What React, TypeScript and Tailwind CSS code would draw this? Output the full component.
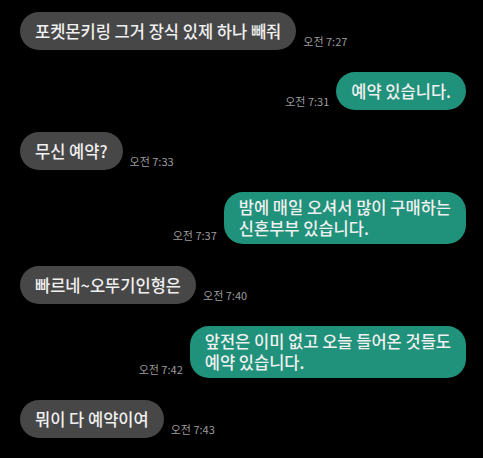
type Message = {
  me: boolean;
  lines: string[];
  time: string;
};

const messages: Message[] = [
  { me: false, lines: ['포켓몬키링 그거 장식 있제 하나 빼줘'], time: '오전 7:27' },
  { me: true, lines: ['예약 있습니다.'], time: '오전 7:31' },
  { me: false, lines: ['무신 예약?'], time: '오전 7:33' },
  { me: true, lines: ['밤에 매일 오셔서 많이 구매하는', '신혼부부 있습니다.'], time: '오전 7:37' },
  { me: false, lines: ['빠르네~오뚜기인형은'], time: '오전 7:40' },
  { me: true, lines: ['앞전은 이미 없고 오늘 들어온 것들도', '예약 있습니다.'], time: '오전 7:42' },
  { me: false, lines: ['뭐이 다 예약이여'], time: '오전 7:43' },
];

function Bubble({ msg }: { msg: Message }) {
  const bubble = (
    <div
      className={
        'min-h-[38px] flex flex-col justify-center px-[15px] py-[5px] rounded-[19px] text-[16.5px] leading-[21px] font-medium text-[#f0f0f0] whitespace-nowrap ' +
        (msg.me ? 'bg-[#20917a]' : 'bg-[#474747]')
      }
    >
      {msg.lines.map((line, i) => (
        <span key={i}>{line}</span>
      ))}
    </div>
  );

  const time = (
    <span className="text-[11px] leading-[14px] text-[#9c9c9c] mb-[2px] whitespace-nowrap">{msg.time}</span>
  );

  return (
    <div className={'flex items-end gap-[7px] ' + (msg.me ? 'justify-end' : 'justify-start')}>
      {msg.me ? (
        <>
          {time}
          {bubble}
        </>
      ) : (
        <>
          {bubble}
          {time}
        </>
      )}
    </div>
  );
}

export default function App() {
  return (
    <div
      className="w-[483px] h-[458px] bg-black flex flex-col gap-[22px] pt-[12px] pl-[20px] pr-[17px] overflow-hidden"
      style={{ fontFamily: '"Noto Sans CJK KR", "Noto Sans", sans-serif' }}
    >
      {messages.map((m, i) => (
        <Bubble key={i} msg={m} />
      ))}
    </div>
  );
}
